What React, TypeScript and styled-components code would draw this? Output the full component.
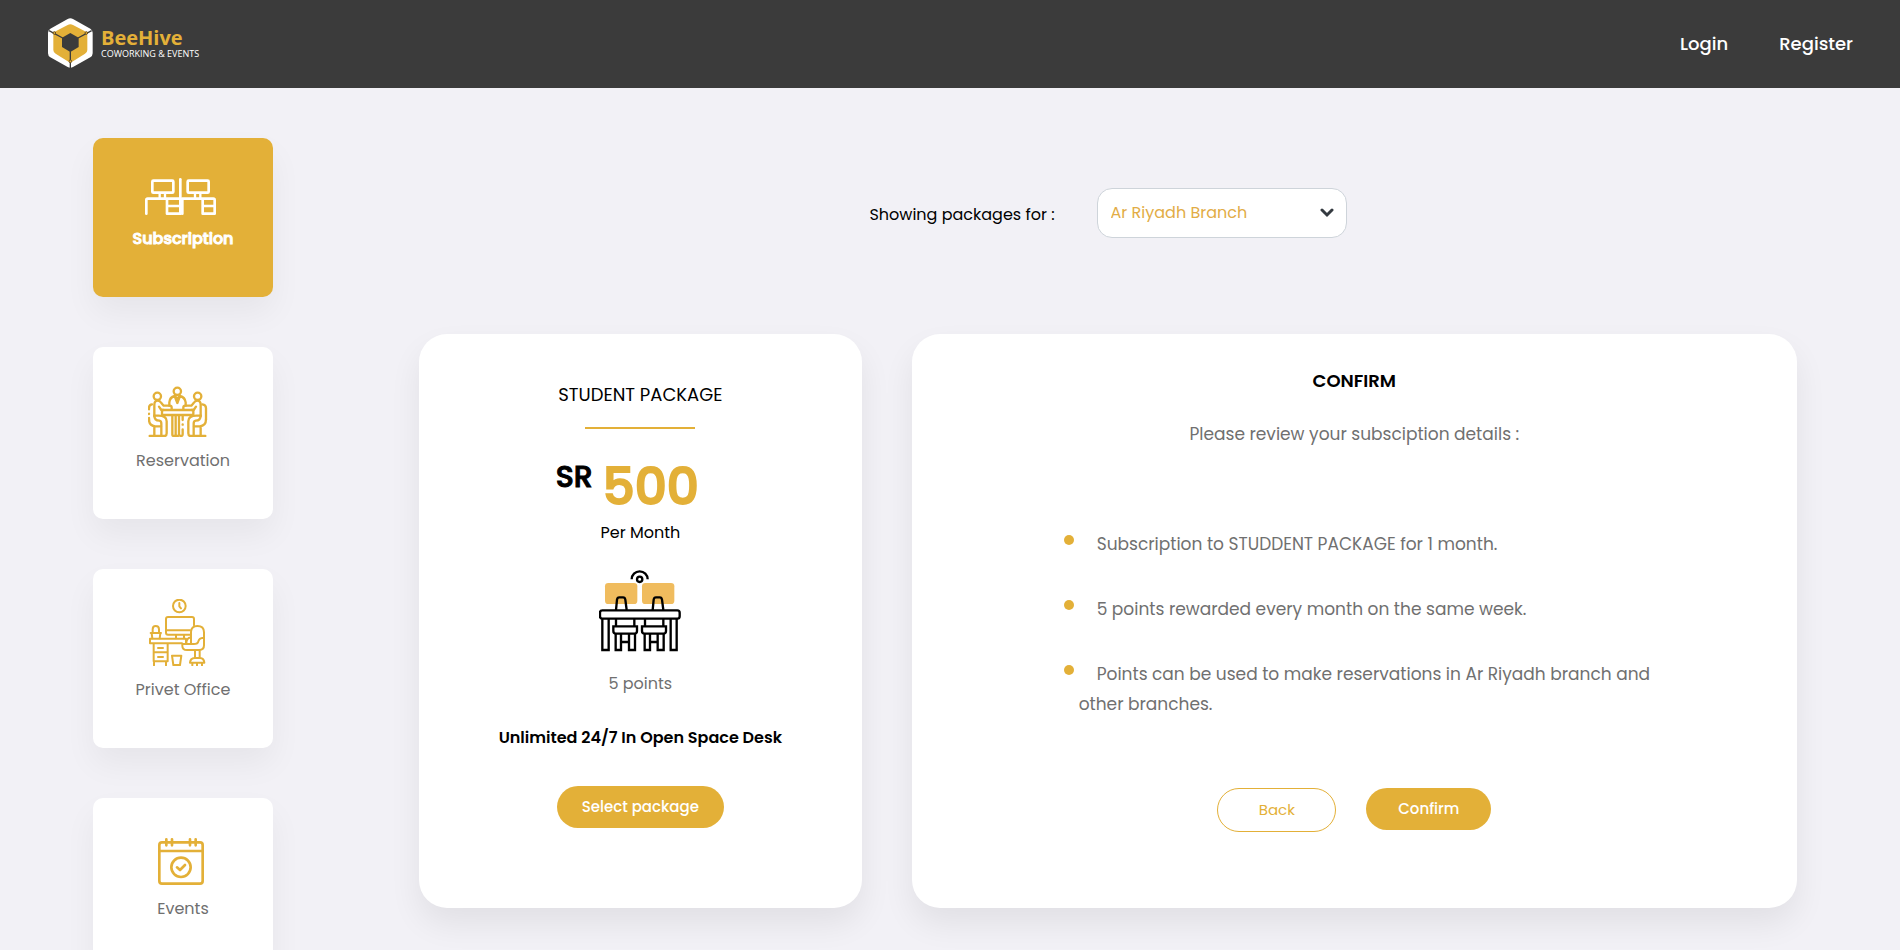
import React from 'react';
import styled, { createGlobalStyle, css } from 'styled-components';

const gold = '#e3b038';
const grey = '#707070';

const GlobalStyle = createGlobalStyle`
  *, *::before, *::after { box-sizing: border-box; }
  body {
    margin: 0;
    background: #f2f1f6;
    color: #000;
    font-family: Poppins, Inter, sans-serif;
    font-size: 16px;
    line-height: 24px;
  }
  h1, h2, p, ul { margin: 0; padding: 0; font-weight: 400; }
  button, select { font-family: inherit; }
`;

const Header = styled.header`
  display: flex;
  align-items: center;
  justify-content: space-between;
  height: 88px;
  padding: 0 47px 0 48px;
  background: #3b3b3b;
`;

const Brand = styled.a`
  display: flex;
  align-items: center;
  gap: 8px;
  padding-bottom: 2px;
  color: #fff;
  text-decoration: none;
  font-family: 'Open Sans', sans-serif;
`;

const BrandText = styled.span`
  display: flex;
  flex-direction: column;
  padding-bottom: 2px;
`;

const BrandName = styled.span`
  color: ${gold};
  font-size: 20px;
  line-height: 24px;
  font-weight: 700;
`;

const BrandTagline = styled.span`
  font-size: 9px;
  line-height: 8px;
`;

const Nav = styled.nav`
  display: flex;
  gap: 51px;
`;

const NavLink = styled.a`
  color: #fff;
  font-size: 18px;
  font-weight: 500;
  text-decoration: none;
`;

const Page = styled.div`
  display: flex;
  align-items: flex-start;
  gap: 146px;
  padding: 50px 103px 50px 93px;
`;

const Sidebar = styled.nav`
  display: flex;
  flex: none;
  flex-direction: column;
  gap: 50px;
  width: 180px;
`;

const Tile = styled.a<{ $active?: boolean }>`
  display: flex;
  flex-direction: column;
  align-items: center;
  gap: 12px;
  padding: 30px 0 46px;
  border-radius: 10px;
  background: #fff;
  color: ${gold};
  box-shadow: 0 16px 32px rgba(0, 0, 0, 0.05);
  text-decoration: none;

  svg {
    fill: none;
    stroke: currentColor;
    stroke-linecap: round;
    stroke-linejoin: round;
  }

  ${({ $active }) =>
    $active &&
    css`
      gap: 11px;
      background: ${gold};
      color: #fff;
    `}
`;

const TileLabel = styled.span<{ $active?: boolean }>`
  color: ${({ $active }) => ($active ? '#fff' : grey)};
  font-weight: ${({ $active }) => ($active ? 500 : 400)};
  -webkit-text-stroke: ${({ $active }) => ($active ? '1px' : '0')};
`;

const Main = styled.main`
  flex: 1;
  min-width: 0;
  padding-top: 50px;
`;

const BranchFilter = styled.div`
  display: flex;
  align-items: center;
  justify-content: center;
  gap: 42px;
  margin-bottom: 96px;
`;

const FilterLabel = styled.label`
  padding-top: 4px;
`;

const SelectBox = styled.div`
  position: relative;
  width: 250px;

  svg {
    position: absolute;
    top: 20px;
    right: 13px;
    pointer-events: none;
  }
`;

const BranchSelect = styled.select`
  width: 100%;
  height: 50px;
  padding: 0 40px 2px 13px;
  border: 1px solid #ced4da;
  border-radius: 15px;
  background: #fff;
  color: #e2ac46;
  font-size: 16px;
  appearance: none;
`;

const Cards = styled.div`
  display: grid;
  grid-template-columns: 1fr 2fr;
  gap: 50px;
`;

const Card = styled.section`
  display: flex;
  flex-direction: column;
  align-items: center;
  border-radius: 28px;
  background: #fff;
  box-shadow: 0 16px 32px rgba(0, 0, 0, 0.07);
`;

const PackageCard = styled(Card)`
  padding: 47px 24px 80px;
`;

const ConfirmCard = styled(Card)`
  padding: 33px 0 76px;
`;

const CardTitle = styled.h2<{ $bold?: boolean }>`
  font-size: 18px;
  line-height: 27px;
  font-weight: ${({ $bold }) => ($bold ? 600 : 400)};
`;

const Rule = styled.div`
  width: 110px;
  height: 2px;
  margin: 19px 0 26px;
  background: ${gold};
`;

const Price = styled.p`
  display: flex;
  align-items: flex-start;
  gap: 10px;
  margin-bottom: 2px;
  padding-right: 26px;
`;

const Currency = styled.span`
  font-size: 30px;
  line-height: 44px;
  font-weight: 500;
  -webkit-text-stroke: 1px;
`;

const Amount = styled.span`
  color: ${gold};
  font-size: 50px;
  line-height: 64px;
  font-weight: 500;
  -webkit-text-stroke: 2px;
`;

const DeskPicture = styled.svg`
  margin: 25px 0 20px;
`;

const Points = styled.p`
  color: ${grey};
`;

const Feature = styled.p`
  margin: 30px 0 36px;
  font-weight: 600;
`;

const Button = styled.button<{ $outline?: boolean }>`
  height: 42px;
  padding: 0 25px 2px;
  border: 0;
  border-radius: 21px;
  background: ${gold};
  color: #fff;
  font-size: 15px;
  font-weight: 500;
  cursor: pointer;

  ${({ $outline }) =>
    $outline &&
    css`
      height: 44px;
      border: 1px solid ${gold};
      border-radius: 22px;
      background: #fff;
      color: ${gold};
      font-weight: 400;
    `}
`;

const Intro = styled.p`
  margin: 25px 0 80px;
  color: ${grey};
  font-size: 17px;
  line-height: 30px;
`;

const Details = styled.ul`
  display: flex;
  flex-direction: column;
  gap: 35px;
  align-self: stretch;
  margin: 0 108px 69px 152px;
  list-style: none;
`;

const Detail = styled.li`
  display: flex;
  gap: 5px;
  color: ${grey};
  font-size: 17px;
  line-height: 30px;

  &::before {
    content: '';
    flex: none;
    width: 10px;
    height: 10px;
    margin-top: 6px;
    border-radius: 50%;
    background: ${gold};
  }
`;

const DetailText = styled.p`
  text-indent: 18px;
`;

const Actions = styled.div`
  display: flex;
  align-items: flex-start;
  gap: 30px;

  button:first-child { width: 119px; }
  button:last-child { width: 125px; }
`;

const LogoMark = () => (
  <svg width="45" height="50" viewBox="144 54 135 150" aria-hidden="true">
    <path
      d="M203 57Q211 52 219 57L271 86Q278 90 278 98V160Q278 168 271 172L219 201Q211 206 203 201L151 172Q144 168 144 160V98Q144 90 151 86Z"
      fill="#fff"
    />
    <path
      d="M203 75Q211 70 219 75L255 94Q262 98 262 106V150Q262 157 255 161L219 184Q211 189 203 184L167 161Q160 157 160 150V106Q160 98 167 94Z"
      fill={gold}
    />
    <path d="M211 99L236 113V141L211 156L186 141V113Z" fill="#3b3b3b" />
    <path d="M147 92L188 114M275 92L234 114M211 154V204" stroke="#3b3b3b" strokeWidth="4" />
    <g fill={gold} stroke="#6b5120" strokeWidth="3">
      <circle cx="163" cy="99" r="4" />
      <circle cx="259" cy="99" r="4" />
      <circle cx="211" cy="184" r="4" />
    </g>
  </svg>
);

const DesksIcon = () => (
  <svg width="76" height="48" viewBox="195 144 228 144" strokeWidth="8" aria-hidden="true">
    <rect x="217" y="182" width="63" height="36" rx="3" />
    <rect x="323" y="182" width="63" height="36" rx="3" />
    <path d="M239 222V234M255 222V234M345 222V234M361 222V234" strokeWidth="7" />
    <path d="M301 178V281" />
    <path d="M199 281V240Q199 236 203 236H301M261 238V281H301M262 258H300" />
    <path d="M307 281V236H400Q404 236 404 240V281H368V238M369 258H403" />
  </svg>
);

const MeetingSide = () => (
  <>
    <circle cx="232" cy="199" r="11" />
    <path d="M223 257V225Q223 212 233 212Q240 212 244 219L251 227H269Q275 227 275 233V238" />
    <path d="M237 230L244 240H250" />
    <path d="M223 257H236Q260 257 260 274V310Q260 318 253 318H244" />
    <path d="M223 257Q223 271 238 272Q244 273 244 281V318H209" />
    <path d="M223 290V317M243 289H226Q207 288 207 268" />
  </>
);

const MeetingIcon = () => (
  <svg width="70" height="60" viewBox="204 141 210 180" strokeWidth="7" aria-hidden="true">
    <circle cx="292" cy="184" r="11" />
    <path d="M268 227V217Q269 202 284 198L292 219L300 198Q315 202 317 217V227M286 199L292 207L298 199" />
    <MeetingSide />
    <g transform="matrix(-1 0 0 1 585 0)">
      <MeetingSide />
      <path d="M207 268V234Q207 224 218 223" />
    </g>
    <path d="M207 268V264M207 252V251M207 238V234Q207 224 216 223" />
    <rect x="246" y="240" width="94" height="15" />
    <path d="M277 257V314Q277 318 282 318Q287 318 287 313V257M287 313Q287 318 292 318Q297 318 297 313V257M297 313Q299 318 303 318Q308 318 308 313V298M308 284V283M308 270V258" />
  </svg>
);

const OfficeIcon = () => (
  <svg width="68" height="67" viewBox="207 147 204 201" strokeWidth="6" aria-hidden="true">
    <circle cx="298" cy="168" r="19" />
    <path d="M298 159V169L303 175" />
    <path d="M331 254H264Q258 254 258 248V207Q258 201 264 201H336Q342 201 342 207V226M260 241H330" />
    <path d="M288 256V265M312 256V265" />
    <path d="M218 248V238Q218 228 227 228Q237 228 237 238V248M212 249H243M215 250L217 265M241 250L239 265" />
    <path d="M318 266H210V280H306M318 268V279" />
    <path d="M221 282V334H263V282M222 307H262M222 334V346M258 334V346" />
    <path d="M234 294H249M234 321H249" />
    <path d="M276 317H304L300 345H280Z" />
    <path d="M333 280V246Q334 228 352 228Q372 228 372 247V286Q372 300 358 300H321Q307 300 307 287V282H341Q354 282 355 274Q357 264 371 263M333 262Q319 264 319 280" />
    <path d="M345 302V322M359 302V322M330 338Q331 325 344 324H360Q372 325 373 338ZM337 340V346M351 340V346M366 340V346" />
  </svg>
);

const CalendarIcon = () => (
  <svg width="50" height="57" viewBox="234 174 150 171" strokeWidth="8" aria-hidden="true">
    <rect x="238" y="217" width="130" height="124" rx="8" />
    <path d="M240 243H366M259 208V226M276 208V226M330 208V226M347 208V226" />
    <circle cx="303" cy="292" r="29" />
    <path d="M291 292L300 300L315 285" />
  </svg>
);

const SharedDeskPicture = () => (
  <DeskPicture width="82" height="82" viewBox="600 60 246 246" fill="none" stroke="#000" strokeWidth="7" aria-hidden="true">
    <g fill="#f0bc5e" stroke="none">
      <rect x="618" y="99" width="97" height="63" rx="10" />
      <rect x="729" y="99" width="97" height="63" rx="10" />
    </g>
    <path d="M698 88A24 24 0 0 1 746 88" />
    <circle cx="722" cy="88" r="8" />
    <path d="M651 180L654 149Q655 142 661 142H672Q678 142 679 149L683 180M761 180L764 149Q765 142 771 142H782Q788 142 789 149L793 180" />
    <rect x="603" y="181" width="239" height="25" rx="7" />
    <path d="M610 206V300H629V206M815 206V300H833V206" />
    <path d="M651 206V228M706 206V228M738 206V228M793 206V228" />
    <path d="M643 229H714V243Q714 251 706 251H651Q643 251 643 243ZM729 229H801V243Q801 251 793 251H737Q729 251 729 243Z" />
    <path d="M650 252V300H666V252M690 252V300H708V252M666 276H690M737 252V300H753V252M776 252V300H794V252M753 276H776" />
  </DeskPicture>
);

const services = [
  { label: 'Subscription', Icon: DesksIcon, active: true },
  { label: 'Reservation', Icon: MeetingIcon },
  { label: 'Privet Office', Icon: OfficeIcon },
  { label: 'Events', Icon: CalendarIcon },
];

const details = [
  'Subscription to STUDDENT PACKAGE for 1 month.',
  '5 points rewarded every month on the same week.',
  'Points can be used to make reservations in Ar Riyadh branch and other branches.',
];

export default function App() {
  return (
    <>
      <GlobalStyle />
      <Header>
        <Brand href="#home">
          <LogoMark />
          <BrandText>
            <BrandName>BeeHive</BrandName>
            <BrandTagline>COWORKING &amp; EVENTS</BrandTagline>
          </BrandText>
        </Brand>
        <Nav aria-label="Account">
          <NavLink href="#login">Login</NavLink>
          <NavLink href="#register">Register</NavLink>
        </Nav>
      </Header>
      <Page>
        <Sidebar aria-label="Services">
          {services.map(({ label, Icon, active }) => (
            <Tile key={label} href={`#${label.toLowerCase().replace(' ', '-')}`} $active={active}>
              <Icon />
              <TileLabel $active={active}>{label}</TileLabel>
            </Tile>
          ))}
        </Sidebar>
        <Main>
          <BranchFilter>
            <FilterLabel htmlFor="branch">Showing packages for :</FilterLabel>
            <SelectBox>
              <BranchSelect id="branch" defaultValue="riyadh">
                <option value="riyadh">Ar Riyadh Branch</option>
              </BranchSelect>
              <svg width="14" height="10" viewBox="0 0 14 10" fill="none" aria-hidden="true">
                <path d="M2 2L7 7L12 2" stroke="#343a40" strokeWidth="3" strokeLinecap="round" />
              </svg>
            </SelectBox>
          </BranchFilter>
          <Cards>
            <PackageCard>
              <CardTitle>STUDENT PACKAGE</CardTitle>
              <Rule />
              <Price>
                <Currency>SR</Currency>
                <Amount>500</Amount>
              </Price>
              <p>Per Month</p>
              <SharedDeskPicture />
              <Points>5 points</Points>
              <Feature>Unlimited 24/7 In Open Space Desk</Feature>
              <Button type="button">Select package</Button>
            </PackageCard>
            <ConfirmCard>
              <CardTitle $bold>CONFIRM</CardTitle>
              <Intro>Please review your subsciption details :</Intro>
              <Details>
                {details.map((text) => (
                  <Detail key={text}>
                    <DetailText>{text}</DetailText>
                  </Detail>
                ))}
              </Details>
              <Actions>
                <Button type="button" $outline>Back</Button>
                <Button type="button">Confirm</Button>
              </Actions>
            </ConfirmCard>
          </Cards>
        </Main>
      </Page>
    </>
  );
}
